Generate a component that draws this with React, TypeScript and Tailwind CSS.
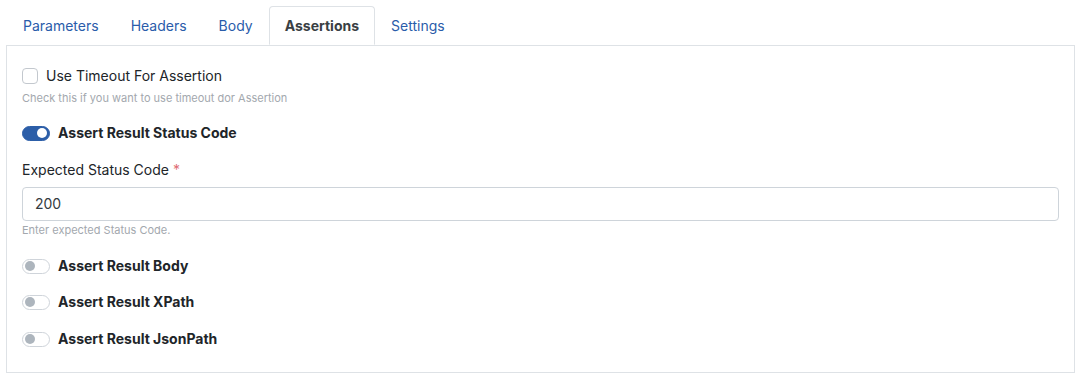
import { useState } from 'react'

const tabs = ['Parameters', 'Headers', 'Body', 'Assertions', 'Settings']

function Toggle({ on }: { on: boolean }) {
  return (
    <span
      className={
        on
          ? 'relative inline-block w-[28px] h-[15px] rounded-full bg-[#2c5ea8] border border-[#2c5ea8]'
          : 'relative inline-block w-[28px] h-[15px] rounded-full bg-white border border-[#cfd4da]'
      }
    >
      <span
        className={
          on
            ? 'absolute top-[1.5px] left-[14px] w-[10px] h-[10px] rounded-full bg-white'
            : 'absolute top-[1.5px] left-[2px] w-[10px] h-[10px] rounded-full bg-[#adb5bd]'
        }
      />
    </span>
  )
}

export default function App() {
  const [active, setActive] = useState('Assertions')

  return (
    <div className="w-[1082px] h-[378px] bg-white pt-[6px] px-[6px] font-['Inter','Liberation_Sans',sans-serif] text-[#212529]">
      <div className="flex pl-px">
        {tabs.map((t) => (
          <button
            key={t}
            onClick={() => setActive(t)}
            className={
              t === active
                ? 'relative -mb-px h-[39px] px-[15px] text-sm font-bold text-[#3a3f44] bg-white border border-[#dee2e6] border-b-white rounded-t-[4px]'
                : 'h-[39px] px-[15px] text-sm text-[#2a5caa] border border-transparent'
            }
          >
            {t}
          </button>
        ))}
      </div>

      <div className="w-[1069px] h-[328px] border border-[#dee2e6] pl-[15px] pr-[15px] pt-5">
        <label className="flex items-center h-5 gap-2 text-sm">
          <span className="w-4 h-4 rounded-[4px] border border-[#c3c8ce] bg-white" />
          <span>Use Timeout For Assertion</span>
        </label>
        <p className="mt-1 text-[11px] leading-4 text-[#a3a8ae]">
          Check this if you want to use timeout dor Assertion
        </p>

        <div className="mt-[17px] flex items-center h-5 gap-2 text-sm font-bold">
          <Toggle on />
          <span>Assert Result Status Code</span>
        </div>

        <div className="mt-[17px] h-5 text-sm leading-5">
          Expected Status Code <span className="text-[#e06c75]">*</span>
        </div>
        <div className="mt-[7px] w-[1037px] h-[34px] rounded-[4px] border border-[#ced4da] flex items-center px-3 text-sm text-[#343a40]">
          200
        </div>
        <p className="mt-px text-[11px] leading-4 text-[#a3a8ae]">Enter expected Status Code.</p>

        <div className="mt-[18px] flex items-center h-5 gap-2 text-sm font-bold">
          <Toggle on={false} />
          <span>Assert Result Body</span>
        </div>
        <div className="mt-4 flex items-center h-5 gap-2 text-sm font-bold">
          <Toggle on={false} />
          <span>Assert Result XPath</span>
        </div>
        <div className="mt-[17px] flex items-center h-5 gap-2 text-sm font-bold">
          <Toggle on={false} />
          <span>Assert Result JsonPath</span>
        </div>
      </div>
    </div>
  )
}
